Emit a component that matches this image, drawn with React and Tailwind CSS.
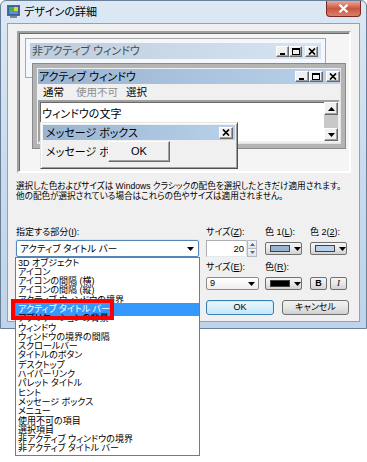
import React from "react";

const raised =
  "bg-[#f0f0f0] border border-t-white border-l-white border-r-[#696969] border-b-[#696969] shadow-[inset_-1px_-1px_0_#a0a0a0]";

function CapBtn({ type, w = 13, h = 11 }) {
  return (
    <div className={"flex items-center justify-center " + raised} style={{ width: w, height: h }}>
      <svg width="8" height="7" viewBox="0 0 8 7">
        {type === "min" && <rect x="1" y="5" width="5" height="2" fill="#000" />}
        {type === "max" && (
          <g fill="none" stroke="#000">
            <rect x="0.5" y="0.5" width="7" height="6" />
            <line x1="0" y1="1.5" x2="8" y2="1.5" />
          </g>
        )}
        {type === "close" && (
          <path d="M1 0.5 L7 6.5 M7 0.5 L1 6.5" stroke="#000" strokeWidth="1.7" />
        )}
      </svg>
    </div>
  );
}

function ScrollBtn({ up }) {
  return (
    <div className={"w-[14px] h-[13px] flex items-center justify-center " + raised}>
      <svg width="7" height="4" viewBox="0 0 7 4">
        {up ? <path d="M0 4 L3.5 0 L7 4 Z" fill="#000" /> : <path d="M0 0 L3.5 4 L7 0 Z" fill="#000" />}
      </svg>
    </div>
  );
}

function Arrow() {
  return (
    <svg width="7" height="4" viewBox="0 0 7 4">
      <path d="M0 0 L7 0 L3.5 4 Z" fill="#000" />
    </svg>
  );
}

function ColorBtn({ color }) {
  return (
    <div className="h-[13px] w-[37px] rounded-[2px] border border-[#707070] bg-gradient-to-b from-[#f4f4f4] via-[#e8e8e8] to-[#d2d2d2] flex items-center">
      <div className="ml-[4px] w-[20px] h-[7px] border border-[#404040]" style={{ background: color }} />
      <div className="ml-[4px]">
        <Arrow />
      </div>
    </div>
  );
}

const ITEMS = [
  "3D オブジェクト",
  "アイコン",
  "アイコンの間隔 (横)",
  "アイコンの間隔 (縦)",
  "アクティブ ウィンドウの境界",
  "アクティブ タイトル バー",
  "アプリケーションの背景",
  "ウィンドウ",
  "ウィンドウの境界の間隔",
  "スクロールバー",
  "タイトルのボタン",
  "デスクトップ",
  "ハイパーリンク",
  "パレット タイトル",
  "ヒント",
  "メッセージ ボックス",
  "メニュー",
  "使用不可の項目",
  "選択項目",
  "非アクティブ ウィンドウの境界",
  "非アクティブ タイトル バー",
];

export default function App() {
  return (
    <div className="relative w-[367px] h-[462px] bg-white overflow-hidden text-black font-['Liberation_Sans','Noto_Sans_CJK_JP',sans-serif] [font-feature-settings:'palt']">
      {/* Window frame */}
      <div className="w-[367px] h-[329px] rounded-t-[6px] border border-[#6a7f98] bg-gradient-to-b from-[#dce8f4] via-[#c9dcef] to-[#bfd4ea] flex flex-col">
        {/* Title bar */}
        <div className="h-[22px] flex items-start">
          <div className="ml-[6px] mt-[4px]">
            <svg width="13" height="13" viewBox="0 0 13 13">
              <rect x="0.5" y="0.5" width="12" height="10" fill="#3a5f9a" stroke="#5a6a7a" />
              <rect x="2" y="2" width="5" height="4" fill="#3fb04a" />
              <rect x="7" y="2" width="4" height="4" fill="#e5d13b" />
              <rect x="2" y="6" width="9" height="3" fill="#5a8fd8" />
              <rect x="3" y="11" width="7" height="2" fill="#7a8a9a" />
            </svg>
          </div>
          <div className="ml-[4px] mt-[4px] text-[11px] leading-[14px] text-black">デザインの詳細</div>
          <div className="ml-auto mr-[5px] w-[35px] h-[16px] rounded-b-[4px] border border-t-0 border-[#7a2a22] bg-gradient-to-b from-[#e9a99c] via-[#c9553f] to-[#d9806c] flex items-center justify-center">
            <svg width="11" height="9" viewBox="0 0 11 9">
              <path d="M1.5 0.8 L9.5 8.2 M9.5 0.8 L1.5 8.2" stroke="#ffffff" strokeWidth="2.2" />
            </svg>
          </div>
        </div>

        {/* Client area */}
        <div className="mx-[6px] h-[299px] border border-[#8ea3b9] bg-[#f0f0f0] flex flex-col">
          {/* Preview */}
          <div className="relative ml-[9px] mt-[7px] w-[334px] h-[142px] border-2 border-t-[#a0a0a0] border-l-[#a0a0a0] border-r-white border-b-white shadow-[inset_1px_1px_0_#696969] bg-[#f5f5f5]">
            {/* Inactive window */}
            <div className="absolute left-[6px] top-[5px] w-[301px] h-[40px] border border-[#a8a8a8] bg-[#f4f7fc] p-[4px]">
              <div className="h-[16px] bg-gradient-to-r from-[#bfcddb] to-[#d7e4f2] flex items-center">
                <span className="ml-[2px] text-[11px] leading-[14px] text-[#434e54]">非アクティブ ウィンドウ</span>
                <div className="ml-auto mr-[3px] flex items-center">
                  <CapBtn type="min" />
                  <CapBtn type="max" />
                  <div className="ml-[3px]">
                    <CapBtn type="close" />
                  </div>
                </div>
              </div>
            </div>

            {/* Active window */}
            <div className="absolute left-[13px] top-[30px] w-[314px] h-[86px] border border-[#8a8a8a] bg-[#b4b4b4] p-[4px]">
              <div className="h-full border border-t-[#f0f0f0] border-l-[#f0f0f0] border-r-[#e3e3e3] border-b-[#e3e3e3] bg-[#f0f0f0] flex flex-col">
                <div className="h-[15px] bg-gradient-to-r from-[#99b4d1] to-[#b9d1ea] flex items-center">
                  <span className="ml-[1px] text-[11px] leading-[14px]">アクティブ ウィンドウ</span>
                  <div className="ml-auto mr-[0px] flex items-center">
                    <CapBtn type="min" w={14} />
                    <CapBtn type="max" w={14} />
                    <div className="ml-[3px]">
                      <CapBtn type="close" w={14} />
                    </div>
                  </div>
                </div>
                <div className="h-[16px] flex items-center text-[10.5px] leading-[14px]">
                  <span className="ml-[5px]">通常</span>
                  <span className="ml-[12px] text-[#8d8d8d]">使用不可</span>
                  <span className="ml-[8px]">選択</span>
                </div>
                <div className="flex-1 border-2 border-t-[#a0a0a0] border-l-[#a0a0a0] border-r-[#f0f0f0] border-b-[#f0f0f0] shadow-[inset_1px_1px_0_#696969] bg-white flex">
                  <div className="flex-1">
                    <div className="ml-[2px] mt-[5px] text-[11px] leading-[14px]">ウィンドウの文字</div>
                  </div>
                  <div className="w-[14px] flex flex-col">
                    <ScrollBtn up />
                    <div className="flex-1 bg-[#c8c8c8]" />
                    <ScrollBtn />
                  </div>
                </div>
              </div>
            </div>

            {/* Message box */}
            <div className="absolute left-[21px] top-[89px] w-[198px] h-[47px] border border-t-[#e3e3e3] border-l-[#e3e3e3] border-r-[#505050] border-b-[#505050] shadow-[inset_1px_1px_0_#fff,inset_-1px_-1px_0_#a0a0a0] bg-[#f0f0f0] p-[2px]">
              <div className="h-[15px] bg-gradient-to-r from-[#99b4d1] to-[#b9d1ea] flex items-center">
                <span className="ml-[3px] text-[11px] leading-[14px]">メッセージ ボックス</span>
                <div className="ml-auto mr-[2px]">
                  <CapBtn type="close" w={14} h={12} />
                </div>
              </div>
              <div className="relative h-[26px]">
                <span className="absolute left-[3px] top-[5px] text-[11px] leading-[14px]">メッセージ ボ</span>
                <div className={"absolute left-[65px] top-[1px] w-[62px] h-[21px] flex items-center justify-center text-[11px] " + raised}>
                  OK
                </div>
              </div>
            </div>
          </div>

          {/* Description */}
          <div className="ml-[8px] mt-[8px] text-[8.6px] leading-[10px] whitespace-nowrap">
            <div>選択した色およびサイズは Windows クラシックの配色を選択したときだけ適用されます。</div>
            <div>他の配色が選択されている場合はこれらの色やサイズは適用されません。</div>
          </div>

          {/* Controls */}
          <div className="ml-[8px] mt-[26px] flex text-[9px] leading-[11px]">
            <div className="w-[183px] flex flex-col">
              <div className="h-[11px]">指定する部分(<span className="underline">I</span>):</div>
              <div className="mt-[2px] h-[17px] rounded-[2px] border border-[#5586b8] shadow-[0_0_0_1px_#d7e8f6] bg-white flex items-center text-[9.5px]">
                <span className="ml-[3px]">アクティブ タイトル バー</span>
                <span className="ml-auto mr-[4px] flex">
                  <Arrow />
                </span>
              </div>
            </div>
            <div className="ml-[7px] flex flex-col">
              <div className="h-[11px] flex">
                <span className="w-[59px]">サイズ(<span className="underline">Z</span>):</span>
                <span className="w-[45px]">色 1(<span className="underline">L</span>):</span>
                <span>色 2(<span className="underline">2</span>):</span>
              </div>
              <div className="mt-[2px] h-[17px] flex items-center">
                <div className="w-[41px] h-[17px] border border-[#abadb3] border-b-[#e3e9ef] border-r-[#dbdfe6] bg-white flex items-center justify-end pr-[2px] text-[9.5px]">
                  20
                </div>
                <div className="w-[10px] h-[17px] flex flex-col">
                  <div className="flex-1 border border-[#b5b9c2] bg-gradient-to-b from-[#f6f6f6] to-[#dfe3ea] flex items-center justify-center">
                    <svg width="5" height="3" viewBox="0 0 5 3"><path d="M0 3 L2.5 0 L5 3 Z" fill="#4d6a99" /></svg>
                  </div>
                  <div className="flex-1 border border-t-0 border-[#b5b9c2] bg-gradient-to-b from-[#f6f6f6] to-[#dfe3ea] flex items-center justify-center">
                    <svg width="5" height="3" viewBox="0 0 5 3"><path d="M0 0 L2.5 3 L5 0 Z" fill="#4d6a99" /></svg>
                  </div>
                </div>
                <div className="ml-[8px]">
                  <ColorBtn color="#99b4d1" />
                </div>
                <div className="ml-[8px]">
                  <ColorBtn color="#b9d1ea" />
                </div>
              </div>
              <div className="mt-[5px] h-[11px] flex">
                <span className="w-[59px]">サイズ(<span className="underline">E</span>):</span>
                <span>色(<span className="underline">R</span>):</span>
              </div>
              <div className="mt-[4px] h-[13px] flex items-center">
                <div className="w-[53px] h-[13px] rounded-[2px] border border-[#8c8c8c] bg-gradient-to-b from-white to-[#eeeeee] flex items-center">
                  <span className="ml-[3px]">9</span>
                  <span className="ml-auto mr-[3px] flex">
                    <Arrow />
                  </span>
                </div>
                <div className="ml-[6px]">
                  <ColorBtn color="#000000" />
                </div>
                <div className="ml-[8px] w-[17px] h-[13px] rounded-[2px] border border-[#707070] bg-gradient-to-b from-[#f4f4f4] via-[#e8e8e8] to-[#d2d2d2] flex items-center justify-center font-bold text-[9px]">
                  B
                </div>
                <div className="ml-[3px] w-[17px] h-[13px] rounded-[2px] border border-[#707070] bg-gradient-to-b from-[#f4f4f4] via-[#e8e8e8] to-[#d2d2d2] flex items-center justify-center italic text-[9px] font-['Liberation_Serif',serif]">
                  I
                </div>
              </div>
              <div className="mt-[10px] h-[15px] flex items-center">
                <div className="w-[68px] h-[15px] rounded-[3px] border border-[#3c7fb1] shadow-[inset_0_0_0_1px_#c8ecfc] bg-gradient-to-b from-[#eaf6fd] via-[#d9f0fc] to-[#bee6fd] flex items-center justify-center">
                  OK
                </div>
                <div className="ml-[8px] w-[67px] h-[15px] rounded-[3px] border border-[#707070] bg-gradient-to-b from-[#f2f2f2] via-[#e6e6e6] to-[#cfcfcf] flex items-center justify-center">
                  キャンセル
                </div>
              </div>
            </div>
          </div>
        </div>
      </div>

      {/* Dropdown list */}
      <div className="absolute left-[15px] top-[257px] w-[185px] h-[199px] border border-[#7a7a7a] bg-white pt-[0.5px]">
        {ITEMS.map((t, i) =>
          i === 5 ? (
            <div key={t} className="relative h-[9.3px] text-[9px] leading-[9.3px] whitespace-nowrap">
              <div className="absolute left-0 right-0 top-[-1.5px] h-[12.5px] bg-[#3399ff]" />
              <span className="relative pl-[2px] text-white">{t}</span>
            </div>
          ) : (
            <div key={t} className="relative h-[9.3px] text-[9px] leading-[9.3px] pl-[2px] whitespace-nowrap">
              {t}
            </div>
          )
        )}
      </div>

      {/* Red highlight box */}
      <div className="absolute left-[11px] top-[299px] w-[103px] h-[21px] border-[4px] border-[#ff0000]" />
    </div>
  );
}
